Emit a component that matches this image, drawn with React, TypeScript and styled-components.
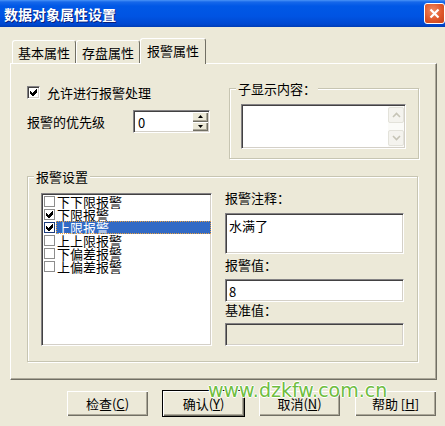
import styled, { createGlobalStyle, css } from 'styled-components';

const FONT = `'Noto Sans CJK SC', 'Liberation Sans', sans-serif`;

const GlobalStyle = createGlobalStyle`
  html, body { margin: 0; padding: 0; background: #ece9d8; }
  body { font-family: ${FONT}; font-size: 13px; line-height: 13px; color: #000; }
  * { box-sizing: border-box; }
`;

const sunken = css`
  border: 1px solid;
  border-color: #848284 #fff #fff #848284;
  box-shadow: inset 1px 1px 0 #424142, inset -1px -1px 0 #d4d0c8;
`;

const raised = css`
  background: #ece9d8;
  box-shadow: inset 1px 1px 0 #fff, inset -1px -1px 0 #716f64, inset -2px -2px 0 #aca899;
`;

const Window = styled.div`
  position: relative;
  width: 445px;
  height: 426px;
  overflow: hidden;
  background: #ece9d8;
`;

const TitleBar = styled.div`
  height: 27px;
  display: flex;
  align-items: center;
  justify-content: space-between;
  padding-left: 4px;
  background: linear-gradient(to bottom, #4a94f7 0, #1668ea 2px, #0058e6 6px, #0054e3 60%, #0048d0 90%, #003cb4 100%);
`;

const Title = styled.span`
  color: #fff;
  font-weight: 700;
  font-size: 14px;
  line-height: 14px;
  text-shadow: 1px 1px 0 #0a1f7a;
`;

const CloseButton = styled.div`
  width: 21px;
  height: 21px;
  border: 1px solid #fff;
  border-radius: 3px;
  background: radial-gradient(circle at 40% 35%, #f08a63 0, #e0582b 55%, #c4401a 100%);
  display: flex;
  align-items: center;
  justify-content: center;
`;

const Body = styled.div`
  padding: 11px 8px 0 10px;
`;

const TabRow = styled.div`
  display: flex;
  align-items: flex-end;
  height: 25px;
  padding-left: 2px;
`;

const Tab = styled.div<{ $active?: boolean }>`
  position: relative;
  z-index: ${(p) => (p.$active ? 1 : 0)};
  height: ${(p) => (p.$active ? 26 : 23)}px;
  margin-bottom: ${(p) => (p.$active ? -1 : 0)}px;
  padding: 5px ${(p) => (p.$active ? 6 : 5)}px 0;
  background: #ece9d8;
  border: 1px solid;
  border-color: #fff #716f64 transparent #fff;
  border-bottom: none;
  border-radius: 3px 3px 0 0;
  white-space: nowrap;
`;

const Panel = styled.div`
  height: 317px;
  border: 1px solid;
  border-color: #fff #716f64 #716f64 #fff;
  box-shadow: inset -1px -1px 0 #aca899;
  padding: 18px 0 0 16px;
`;

const TopRow = styled.div`
  display: flex;
`;

const LeftCol = styled.div`
  width: 202px;
`;

const CheckRow = styled.div`
  display: flex;
  align-items: center;
  gap: 7px;
  margin-top: 4px;
`;

const CheckBox = styled.div`
  width: 13px;
  height: 13px;
  background: #fff;
  ${sunken};
  display: flex;
  align-items: center;
  justify-content: center;
`;

const PriorityRow = styled.div`
  display: flex;
  align-items: center;
  margin-top: 11px;
`;

const PriorityLabel = styled.span`
  width: 106px;
`;

const SpinBox = styled.div`
  width: 77px;
  height: 23px;
  display: flex;
  background: #fff;
  ${sunken};
  padding: 1px;
`;

const SpinValue = styled.div`
  flex: 1;
  padding: 4px 0 0 3px;
`;

const SpinButtons = styled.div`
  width: 16px;
  display: flex;
  flex-direction: column;
`;

const SpinButton = styled.div`
  flex: 1;
  ${raised};
  display: flex;
  align-items: center;
  justify-content: center;
`;

const GroupBox = styled.fieldset<{ $w: number; $h: number; $pad: string }>`
  width: ${(p) => p.$w}px;
  height: ${(p) => p.$h}px;
  margin: 0;
  padding: ${(p) => p.$pad};
  border: 1px solid #c7c5b2;
  box-shadow: inset 1px 1px 0 #fff, 1px 1px 0 #fff;
  min-inline-size: 0;
`;

const Legend = styled.legend<{ $offset: number }>`
  padding: 0 2px;
  margin-left: ${(p) => p.$offset}px;
  line-height: 13px;
  background: #ece9d8;
`;

const SubBox = styled.div`
  width: 165px;
  height: 45px;
  background: #fff;
  ${sunken};
  display: flex;
  justify-content: flex-end;
  padding: 1px;
`;

const ScrollBar = styled.div`
  width: 16px;
  display: flex;
  flex-direction: column;
  justify-content: space-between;
  background: #fbfbf8;
  padding: 1px 0;
`;

const ScrollButton = styled.div`
  height: 16px;
  border: 1px solid #e3e2da;
  border-radius: 2px;
  background: #f4f3ee;
  display: flex;
  align-items: center;
  justify-content: center;
`;

const AlarmGroupWrap = styled.div`
  margin-top: 11px;
`;

const AlarmInner = styled.div`
  display: flex;
  gap: 13px;
`;

const ListBox = styled.div`
  width: 171px;
  height: 153px;
  background: #fff;
  ${sunken};
  padding: 1px 0 0 2px;
`;

const ListItem = styled.div`
  height: 13px;
  display: flex;
  align-items: center;
  gap: 1px;
`;

const ListCheck = styled.div<{ $focus?: boolean }>`
  width: 11px;
  height: 11px;
  border: 1px solid ${(p) => (p.$focus ? '#1c3c7c' : '#8d8d8d')};
  background: #fff;
  display: flex;
  align-items: center;
  justify-content: center;
`;

const ListText = styled.div<{ $selected?: boolean }>`
  flex: 1;
  height: 13px;
  line-height: 13px;
  padding-left: 1px;
  white-space: nowrap;
  background: ${(p) => (p.$selected ? '#316ac5' : 'transparent')};
  color: ${(p) => (p.$selected ? '#fff' : '#000')};
  outline: ${(p) => (p.$selected ? '1px dotted #e8a040' : 'none')};
  outline-offset: -1px;
`;

const RightCol = styled.div`
  width: 179px;
  display: flex;
  flex-direction: column;
`;

const FieldLabel = styled.div<{ $mt: number }>`
  margin-top: ${(p) => p.$mt}px;
  height: 13px;
`;

const Field = styled.div<{ $h: number; $mt: number; $disabled?: boolean }>`
  margin-top: ${(p) => p.$mt}px;
  height: ${(p) => p.$h}px;
  background: ${(p) => (p.$disabled ? '#ece9d8' : '#fff')};
  ${sunken};
  padding: 5px 3px 0;
`;

const ButtonRow = styled.div`
  display: flex;
  justify-content: flex-end;
  gap: 13px;
  margin-top: 10px;
`;

const Button = styled.div<{ $focused?: boolean }>`
  width: 83px;
  height: 27px;
  ${raised};
  border: 1px solid ${(p) => (p.$focused ? '#000' : 'transparent')};
  display: flex;
  align-items: center;
  justify-content: center;
  padding-bottom: 1px;
  white-space: nowrap;

  u {
    text-decoration: underline;
    text-underline-offset: 1px;
  }
`;

const Watermark = styled.div`
  position: absolute;
  left: 208px;
  top: 380px;
  font-family: 'DejaVu Sans', 'Liberation Sans', sans-serif;
  font-size: 19px;
  line-height: 20px;
  color: #6fbd3f;
  text-shadow: 1px 0 0 #fff, -1px 0 0 #fff, 0 1px 0 #fff, 0 -1px 0 #fff;
  white-space: nowrap;
`;

const Check = () => (
  <svg width="7" height="7" viewBox="0 0 7 7" shapeRendering="crispEdges">
    <path d="M0 2 L2 4 L6 0 L7 0 L7 3 L3 7 L2 7 L0 5 Z" fill="#000" />
  </svg>
);

const Triangle = ({ up }: { up?: boolean }) => (
  <svg width="5" height="3" viewBox="0 0 5 3">
    <path d={up ? 'M2.5 0 L5 3 L0 3 Z' : 'M0 0 L5 0 L2.5 3 Z'} fill="#000" />
  </svg>
);

const Chevron = ({ up }: { up?: boolean }) => (
  <svg width="9" height="6" viewBox="0 0 9 6">
    <path d={up ? 'M1 5 L4.5 1.5 L8 5' : 'M1 1 L4.5 4.5 L8 1'} stroke="#c6c4b6" strokeWidth="1.6" fill="none" />
  </svg>
);

const items = [
  { label: '下下限报警', checked: false },
  { label: '下限报警', checked: true },
  { label: '上限报警', checked: true, selected: true },
  { label: '上上限报警', checked: false },
  { label: '下偏差报警', checked: false },
  { label: '上偏差报警', checked: false },
];

const App = () => {
  return (
    <>
      <GlobalStyle />
      <Window>
        <TitleBar>
          <Title>数据对象属性设置</Title>
          <CloseButton>
            <svg width="11" height="11" viewBox="0 0 11 11">
              <path d="M1.5 1.5 L9.5 9.5 M9.5 1.5 L1.5 9.5" stroke="#fff" strokeWidth="2.2" />
            </svg>
          </CloseButton>
        </TitleBar>
        <Body>
          <TabRow>
            <Tab>基本属性</Tab>
            <Tab>存盘属性</Tab>
            <Tab $active>报警属性</Tab>
          </TabRow>
          <Panel>
            <TopRow>
              <LeftCol>
                <CheckRow>
                  <CheckBox>
                    <Check />
                  </CheckBox>
                  <span>允许进行报警处理</span>
                </CheckRow>
                <PriorityRow>
                  <PriorityLabel>报警的优先级</PriorityLabel>
                  <SpinBox>
                    <SpinValue>0</SpinValue>
                    <SpinButtons>
                      <SpinButton>
                        <Triangle up />
                      </SpinButton>
                      <SpinButton>
                        <Triangle />
                      </SpinButton>
                    </SpinButtons>
                  </SpinBox>
                </PriorityRow>
              </LeftCol>
              <GroupBox $w={190} $h={77} $pad="9px 11px 0">
                <Legend $offset={-5}>子显示内容：</Legend>
                <SubBox>
                  <ScrollBar>
                    <ScrollButton>
                      <Chevron up />
                    </ScrollButton>
                    <ScrollButton>
                      <Chevron />
                    </ScrollButton>
                  </ScrollBar>
                </SubBox>
              </GroupBox>
            </TopRow>
            <AlarmGroupWrap>
              <GroupBox $w={391} $h={192} $pad="10px 13px 0">
                <Legend $offset={-7}>报警设置</Legend>
                <AlarmInner>
                  <ListBox>
                    {items.map((it) => (
                      <ListItem key={it.label}>
                        <ListCheck $focus={it.selected}>{it.checked && <Check />}</ListCheck>
                        <ListText $selected={it.selected}>{it.label}</ListText>
                      </ListItem>
                    ))}
                  </ListBox>
                  <RightCol>
                    <FieldLabel $mt={-2}>报警注释：</FieldLabel>
                    <Field $h={41} $mt={9}>水满了</Field>
                    <FieldLabel $mt={4}>报警值：</FieldLabel>
                    <Field $h={23} $mt={8}>8</Field>
                    <FieldLabel $mt={1}>基准值：</FieldLabel>
                    <Field $h={23} $mt={7} $disabled />
                  </RightCol>
                </AlarmInner>
              </GroupBox>
            </AlarmGroupWrap>
          </Panel>
          <ButtonRow>
            <Button>
              检查(<u>C</u>)
            </Button>
            <Button $focused>
              确认(<u>Y</u>)
            </Button>
            <Button>
              取消(<u>N</u>)
            </Button>
            <Button>
              帮助 [<u>H</u>]
            </Button>
          </ButtonRow>
        </Body>
        <Watermark>www.dzkfw.com.cn</Watermark>
      </Window>
    </>
  );
};

export default App;
